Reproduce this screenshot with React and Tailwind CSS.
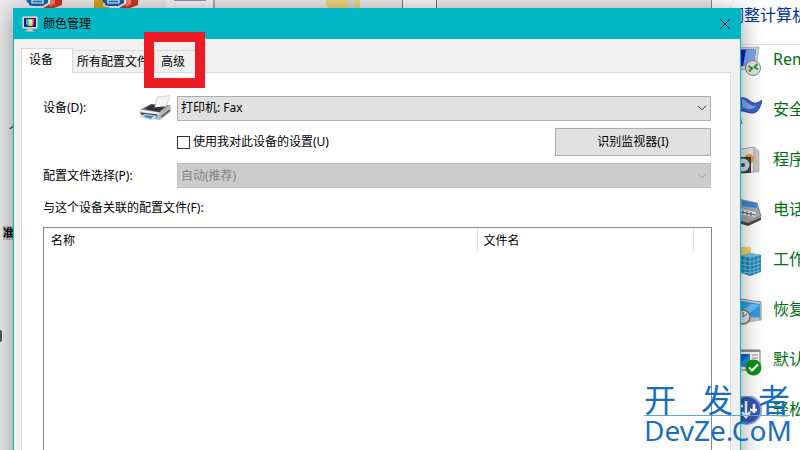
import React from "react";

const Chevron = ({ className }) => (
  <svg viewBox="0 0 10 6" className={"pointer-events-none absolute right-1 top-1/2 -mt-[3px] h-[6px] w-[10px] " + className} fill="none" stroke="currentColor" strokeWidth="1">
    <path d="M1 .8 5 4.8 9 .8" />
  </svg>
);

const MonitorIcon = () => (
  <svg viewBox="0 0 16 16" className="h-4 w-4 shrink-0">
    <defs>
      <linearGradient id="spectrum"><stop offset="0" stopColor="#18b8e8" /><stop offset=".35" stopColor="#38d860" /><stop offset=".6" stopColor="#f8f040" /><stop offset="1" stopColor="#f03048" /></linearGradient>
    </defs>
    <rect x=".5" y=".5" width="15" height="12" rx="1" fill="#d8d8d4" stroke="#b8b8b4" />
    <rect x="2" y="2" width="12" height="9" fill="#1c1c90" />
    <path d="M4 3h8v5l-2 2H6L4 8z" fill="url(#spectrum)" />
    <path d="M6 4h4v2L8 9z" fill="#fff" opacity=".6" />
    <path d="M6 13h4l2 2.500H4z" fill="#d8d0c0" stroke="#a8a8a8" strokeWidth=".5" />
  </svg>
);

const PrinterIcon = () => (
  <svg viewBox="0 0 32 26" className="h-[26px] w-8 shrink-0">
    <path d="M18 2 31 .5 27.500 11 15 13z" fill="#f4f4f4" stroke="#c4c4c4" strokeWidth=".7" />
    <path d="M1 14.500 12 9l5 .3-2 3.700 12-1.500 1-1.500 3.500.3L21 19z" fill="#8b9095" />
    <path d="M5 14 12 9.500l4 .2-.8 2.800 11-1-6 5.500z" fill="#303438" />
    <path d="M0 15 20 17.500 31.500 10v7L21 25l-6-1L1 19z" fill="#b5b9bd" />
    <path d="M0 14.500 20 17.500v2L1 17z" fill="#f0f1f2" />
    <path d="M2 17.500 18 19.500v3L2 19.500z" fill="#34383c" />
    <path d="m1 21.500 5-2.500 12 2-5 4z" fill="#e6f2fa" stroke="#9aaab5" strokeWidth=".5" />
    <path d="m4 21.300 3-1.400 8 1.500-3.500 2.300z" fill="#2a86d2" />
    <path d="m22 22 9-7" stroke="#4a4e52" strokeWidth="1.500" />
  </svg>
);

const CrateIcon = ({ left }) => (
  <svg viewBox="0 0 48 8" className="h-2 w-12 shrink-0">
    <path d="M2 0h16v8H2z" fill={left} />
    <path d="M10 0h22v3l-6 3H14z" fill="#1560b4" />
    <path d="M16 0h11v3H16z" fill="#1c72c4" stroke="#fff" strokeWidth="1.200" />
    <path d="M12 3v3l14 2 8-5V0" fill="none" stroke="#f4f4f4" strokeWidth="1.300" />
    <path d="M27 8 34 4V0h12v5l-8 3z" fill="#d8331c" />
    <path d="M34 0h5v4l-5 3z" fill="#f0806a" />
  </svg>
);

const art = {
  remote: (
    <>
      <path d="M0 2 27 1 24 22 0 25z" fill="#d8dade" stroke="#8b929b" strokeWidth=".6" />
      <path d="M0 4 24 3 22 19 0 21z" fill="#0c20c0" />
      <path d="M14 3.500 24 3 22 19 11 20z" fill="#7fa6ee" />
      <circle cx="21" cy="22" r="7.500" fill="#e4e5e6" stroke="#888" />
      <path d="m16.500 20 3.500 2.500-3 3m8.500-7.500-3 3 3.500 2.500" fill="none" stroke="#2f9438" strokeWidth="2" />
    </>
  ),
  flag: (
    <>
      <path d="M4 4C10 0 14 2 18 5s7 3 12-1c-2 8-4 13-10 13-6 0-9-4-15-1z" fill="#3b62c8" stroke="#26469e" />
      <path d="M10 3c5 1 7 8 14 7-4 5-9 3-14 1z" fill="#86a6ec" />
      <path d="m3 4 6 24" stroke="#777" strokeWidth="3" />
    </>
  ),
  program: (
    <>
      <path d="M4 4 22 1v25L4 28z" fill="#e9e9e7" stroke="#a5a5a5" />
      <path d="m22 1 5 4v21l-5 0z" fill="#c4c6c8" stroke="#999" strokeWidth=".5" />
      <circle cx="17" cy="13" r="5" fill="#f09a32" />
      <path d="M5 11h14v16H5z" fill="#36414c" />
      <circle cx="11" cy="19" r="6.500" fill="#cfdce6" />
      <circle cx="11" cy="19" r="2" fill="#36414c" />
    </>
  ),
  phone: (
    <>
      <path d="m6 3 19 4 4 13-14 7L0 22z" fill="#a2a6aa" stroke="#666" strokeWidth=".7" />
      <path d="m10 5 14 2 1 5-15-2z" fill="#2f86dc" />
      <path d="m9 13 15 3-1 5-15-3z" fill="#e8eaec" />
      <path d="M11 14v4m4-3v4m4-3v4M9 16l14 3" stroke="#555" />
      <path d="m0 23 16 4 13-6v3l-13 6-16-5z" fill="#45484c" />
      <path d="m2 3 5 1-1 15-4 1z" fill="#4c5056" />
    </>
  ),
  work: (
    <>
      <path d="M0 1h19v22H0z" fill="#f2cf68" />
      <path d="m9 10 9-3 11 2v17l-11 4-9-3z" fill="#1f86b6" />
      <path d="m9 10 9-3 11 2-11 3z" fill="#6fbfe0" />
      <path d="M18 12v17m-5-18v17m9-18v18m4-19v18M9 14l9 2 11-3M9 18l9 2 11-3M9 22l9 2 11-3M9 26l9 1 11-3" stroke="#8bd0ea" strokeWidth=".7" fill="none" />
    </>
  ),
  restore: (
    <>
      <path d="m2 2 27 4v18L2 20z" fill="#d4d8da" stroke="#888" />
      <path d="m4 4 24 4v14L4 18z" fill="#2e9ae4" />
      <path d="m14 20 14-11-9-1L4 18z" fill="#67bef6" />
      <path d="m17 22 9-1 2 3-11 2z" fill="#bfc5ca" stroke="#888" strokeWidth=".5" />
      <circle cx="11" cy="21" r="7" fill="#e2e6e8" stroke="#777" strokeWidth="1.500" />
      <path d="M11 16v5l4-3" fill="none" stroke="#555" />
    </>
  ),
  defaults: (
    <>
      <path d="M1 4h27v20H1z" fill="#fafafa" stroke="#777" />
      <path d="M1 4h27v2H1z" fill="#8b8f93" />
      <path d="M4 8h14v13H4z" fill="#0a68c4" />
      <path d="M4 21 18 8v13z" fill="#2c8ae0" />
      <path d="M20 9h6m-6 3h6m-6 3h6" stroke="#888" />
      <circle cx="21.500" cy="21.500" r="8" fill="#109018" />
      <path d="m17 21.500 3 3 6-6" fill="none" stroke="#fff" strokeWidth="2.200" />
    </>
  ),
  ease: (
    <>
      <circle cx="15" cy="14" r="14" fill="#3357b4" stroke="#8fa0d0" strokeWidth="2" />
      <path d="M14 5v15m-4-4 4 5 4-5M22 8v9m-4-3h7M5 10h6" fill="none" stroke="#fff" strokeWidth="2.500" />
    </>
  ),
};

const links = [
  ["remote", "RemoteApp 和桌面连接"],
  ["flag", "安全和维护"],
  ["program", "程序和功能"],
  ["phone", "电话和调制解调器"],
  ["work", "工作文件夹"],
  ["restore", "恢复"],
  ["defaults", "默认程序"],
  ["ease", "轻松使用设置中心"],
];

function Desktop() {
  return (
    <div className="absolute inset-0 bg-[#ebebeb]">
      <div className="flex h-2 items-start overflow-hidden pl-4">
        <CrateIcon left="#e8ecf4" />
        <span className="w-7" />
        <CrateIcon left="#d8a020" />
        <span className="ml-[26px] flex h-2 w-[49px] justify-center border-r-2 border-[#aaa] bg-[#f4f4f6]">
          <span className="h-px w-8 bg-[#8a8fb8]" />
        </span>
        <span className="ml-[111px] h-2 w-[22px] rounded-bl bg-[#f2d57e]" />
        <span className="h-2 w-[7px] bg-[#d8d8d8]" />
        <span className="h-2 w-[5px] bg-[#f2d57e]" />
        <span className="ml-[42px] h-2 w-[35px] border-x border-[#777] bg-[#f8f8f8]" />
      </div>
      <div className="flex w-[13px] flex-col items-end overflow-hidden pt-[114px] text-[11px] leading-4 text-black">
        <span className="h-4 w-1 overflow-hidden">个</span>
        <span className="mt-[88px] h-[14px] w-[10px] overflow-hidden bg-[#b9bcc0] font-bold leading-[14px]">准</span>
        <span className="mt-[90px] h-3 w-[2px] self-start rounded-r bg-[#555]" />
      </div>
    </div>
  );
}

function ControlPanel() {
  return (
    <section className="absolute inset-y-0 left-[711px] right-0 overflow-hidden border-l border-[#888] bg-white">
      <h2 className="h-[30px] whitespace-nowrap pl-4 text-[16px] leading-[30px] text-[#003399]">调整计算机的设置</h2>
      <div className="mt-[14px] border-t border-[#d5e3f2]">
        {links.map(([icon, text]) => (
          <a key={text} href="#" className="flex h-[50px] items-start gap-[11px] whitespace-nowrap pl-5 text-[16px] text-[#007010]">
            <svg viewBox="0 0 30 30" className="mt-px h-[30px] w-[30px] shrink-0">{art[icon]}</svg>
            <span className="leading-7">{text}</span>
          </a>
        ))}
      </div>
    </section>
  );
}

const tab = "relative flex h-[22px] items-center border border-b-0 border-[#d9d9d9] bg-[#f0f0f0] whitespace-nowrap";

function ColorManagement() {
  return (
    <section className="absolute -bottom-10 left-[13px] right-[59px] top-2 flex flex-col border border-[#00b7c3] bg-[#f0f0f0] text-[12px] text-black shadow-[0_4px_22px_rgba(0,0,0,0.4)]">
      <header className="flex h-[30px] shrink-0 items-center bg-[#00b7c6] pl-2 pr-[9px]">
        <MonitorIcon />
        <h1 className="ml-[5px] flex-1">颜色管理</h1>
        <button aria-label="关闭" className="flex h-3 w-3 items-center justify-center">
          <svg viewBox="0 0 12 12" className="h-3 w-3" stroke="#111" strokeWidth="1"><path d="m1 1 10 10M11 1 1 11" /></svg>
        </button>
      </header>
      <div className="flex flex-1 flex-col pl-[7px] pr-[9px] pt-[9px]">
        <div role="tablist" className="flex h-6 items-end">
          <button role="tab" aria-selected="true" className="relative z-10 -mb-px flex h-[25px] w-[52px] items-center border border-b-0 border-[#d9d9d9] bg-white pb-[2px] pl-[7px]">设备</button>
          <button role="tab" aria-selected="false" className={tab + " w-[81px] border-l-0 pl-1"}>所有配置文件</button>
          <button role="tab" aria-selected="false" className={tab + " w-[46px] pl-[6px]"}>
            高级
            <span className="pointer-events-none absolute -left-[11px] -top-[19px] h-14 w-[61px] border-10 border-[#ed1c24]" />
          </button>
        </div>
        <div role="tabpanel" className="flex flex-1 flex-col border border-[#dcdcdc] bg-white pl-[21px] pr-[18px] pt-[22px]">
          <div className="grid grid-cols-[134px_1fr] items-center">
            <label htmlFor="device" className="flex items-center justify-between pr-[6px]">设备(D):<PrinterIcon /></label>
            <div className="relative mr-px h-[25px]">
              <select id="device" className="h-full w-full appearance-none border border-[#adadad] bg-[#e1e1e1] pl-[3px]">
                <option>打印机: Fax</option>
              </select>
              <Chevron className="text-[#333]" />
            </div>
            <span />
            <div className="mr-px mt-[7px] flex h-7 items-center">
              <label className="flex flex-1 items-center gap-[3px]">
                <input type="checkbox" className="h-[13px] w-[13px] appearance-none border border-[#333] bg-white" />
                使用我对此设备的设置(U)
              </label>
              <button className="h-7 w-[156px] border border-[#adadad] bg-[#e1e1e1]">识别监视器(I)</button>
            </div>
            <label htmlFor="profile" className="mt-2">配置文件选择(P):</label>
            <div className="relative mr-px mt-[7px] h-[25px]">
              <select id="profile" disabled className="h-full w-full appearance-none border border-[#bfbfbf] bg-[#cccccc] pl-[3px] text-[#838383] opacity-100">
                <option>自动(推荐)</option>
              </select>
              <Chevron className="text-[#a0a0a0]" />
            </div>
          </div>
          <h2 className="mt-[10px] leading-5">与这个设备关联的配置文件(F):</h2>
          <div className="mt-[9px] flex-1 border border-[#828790]">
            <table className="w-full table-fixed text-left">
              <thead>
                <tr className="h-[25px]">
                  <th className="w-[433px] border-r border-[#e5e5e5] pl-[7px] font-normal">名称</th>
                  <th className="border-r border-[#e5e5e5] pl-[6px] font-normal">文件名</th>
                  <th className="w-[18px]" />
                </tr>
              </thead>
            </table>
          </div>
        </div>
      </div>
    </section>
  );
}

function Watermark() {
  return (
    <div className="pointer-events-none absolute bottom-[5px] right-[10px] w-[146px] text-[#1a6fbd]">
      <div className="flex h-[31px] items-center justify-between border-b border-[#58a9d8] text-[32px] leading-[30px]">
        <span>开</span><span>发</span><span>者</span>
      </div>
      <div className="whitespace-nowrap font-['Noto_Sans',sans-serif] text-[28px] leading-[29px]">DevZe.CoM</div>
    </div>
  );
}

export default function App() {
  return (
    <main className="relative h-screen overflow-hidden font-['Noto_Sans','Noto_Sans_CJK_SC',sans-serif]">
      <Desktop />
      <ControlPanel />
      <ColorManagement />
      <Watermark />
    </main>
  );
}
